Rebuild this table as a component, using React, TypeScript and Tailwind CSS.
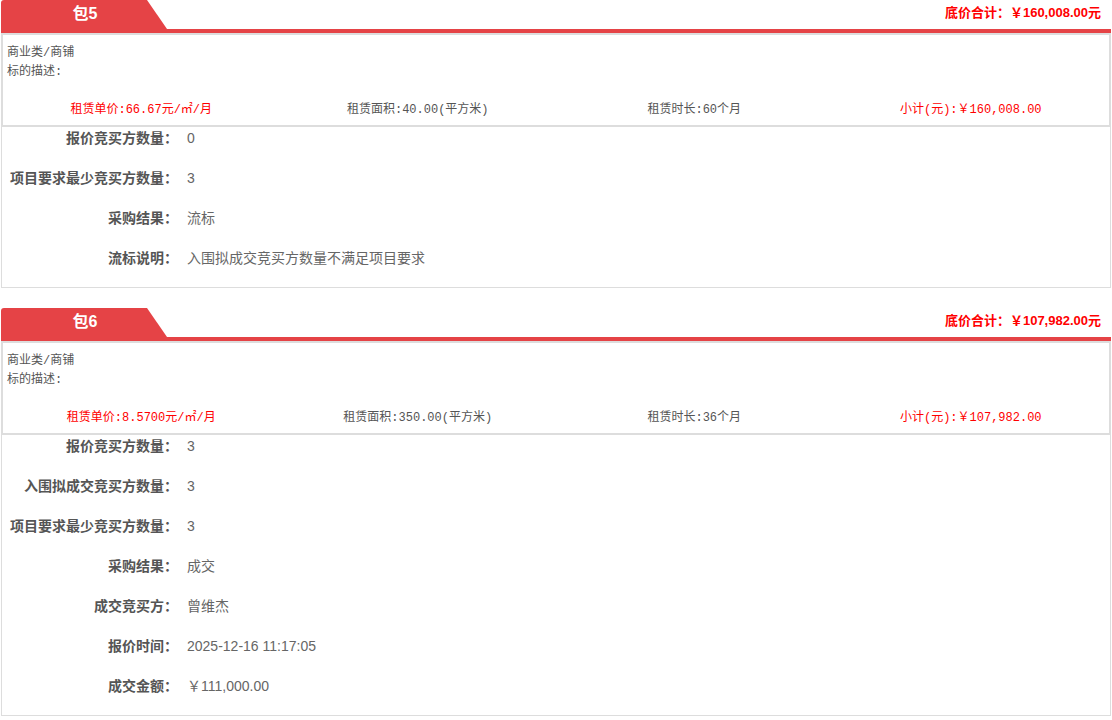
import React from "react";

type Row = { label: string; value: string };
type Pkg = {
  name: string;
  total: string;
  price: string;
  area: string;
  term: string;
  subtotal: string;
  rows: Row[];
};

const pkgs: Pkg[] = [
  {
    name: "包5",
    total: "底价合计：￥160,008.00元",
    price: "租赁单价:66.67元/㎡/月",
    area: "租赁面积:40.00(平方米)",
    term: "租赁时长:60个月",
    subtotal: "小计(元):￥160,008.00",
    rows: [
      { label: "报价竞买方数量：", value: "0" },
      { label: "项目要求最少竞买方数量：", value: "3" },
      { label: "采购结果：", value: "流标" },
      { label: "流标说明：", value: "入围拟成交竞买方数量不满足项目要求" },
    ],
  },
  {
    name: "包6",
    total: "底价合计：￥107,982.00元",
    price: "租赁单价:8.5700元/㎡/月",
    area: "租赁面积:350.00(平方米)",
    term: "租赁时长:36个月",
    subtotal: "小计(元):￥107,982.00",
    rows: [
      { label: "报价竞买方数量：", value: "3" },
      { label: "入围拟成交竞买方数量：", value: "3" },
      { label: "项目要求最少竞买方数量：", value: "3" },
      { label: "采购结果：", value: "成交" },
      { label: "成交竞买方：", value: "曾维杰" },
      { label: "报价时间：", value: "2025-12-16 11:17:05" },
      { label: "成交金额：", value: "￥111,000.00" },
    ],
  },
];

function Package({ p, first }: { p: Pkg; first: boolean }) {
  return (
    <div className={`w-[1110px] ml-[1px] ${first ? "" : "mt-[20px]"}`}>
      <div className="flex h-[33px] justify-between border-b-4 border-[#e54346]">
        <div className="relative w-[166px] h-[29px] bg-[#e54346] rounded-tl-[3px] [clip-path:polygon(0_0,146px_0,166px_100%,0_100%)]">
          <div className="w-[150px] pl-[18px] text-center text-white font-bold text-[16px] leading-[28px]">
            {p.name}
          </div>
        </div>
        <div className="mt-[4px] mr-[10px] leading-[18px] text-[13px] font-bold text-[#ff0000]">
          {p.total}
        </div>
      </div>
      <div
        className="border-2 border-[#dddddd] pt-[9px] pb-[5px] text-[12px] text-[#555555]"
        style={{ fontFamily: '"Liberation Mono", "Noto Sans CJK SC", monospace' }}
      >
        <div className="pl-[4px] leading-[19px]">商业类/商铺</div>
        <div className="pl-[4px] leading-[19px]">标的描述:</div>
        <div className="mt-[18px] grid grid-cols-4 text-center leading-[20px]">
          <div className="text-[#ff0000]">{p.price}</div>
          <div>{p.area}</div>
          <div>{p.term}</div>
          <div className="text-[#ff0000]">{p.subtotal}</div>
        </div>
      </div>
      <div className="border-x border-b border-[#dddddd] pb-[18px]">
        {p.rows.map((r, i) => (
          <div
            key={i}
            className={`flex text-[14px] leading-[22px] ${i < p.rows.length - 1 ? "mb-[18px]" : ""}`}
          >
            <div className="w-[176px] text-right font-bold text-[#555555]">{r.label}</div>
            <div className="ml-[9px] text-[#666666]">{r.value}</div>
          </div>
        ))}
      </div>
    </div>
  );
}

export default function App() {
  return (
    <div
      className="w-[1112px] h-[720px] bg-white overflow-hidden"
      style={{ fontFamily: '"Liberation Sans", "Noto Sans CJK SC", sans-serif' }}
    >
      {pkgs.map((p, i) => (
        <Package key={i} p={p} first={i === 0} />
      ))}
    </div>
  );
}
